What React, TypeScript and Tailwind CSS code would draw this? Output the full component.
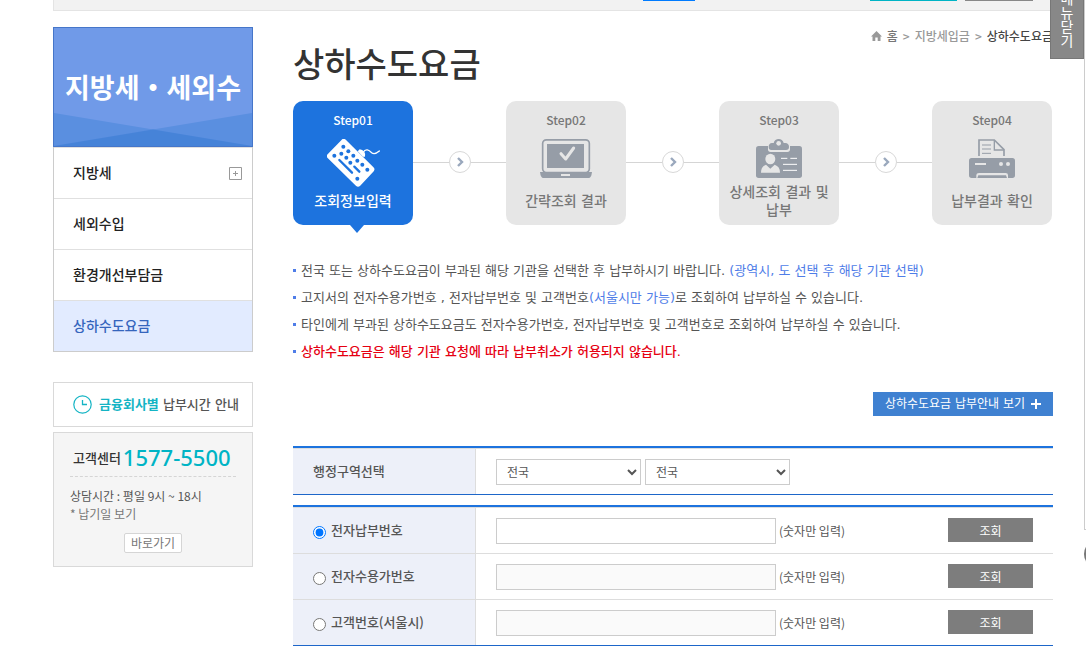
import { useState } from 'react';
import type { ReactNode } from 'react';
import { clsx } from 'clsx';

const menuItems = [
  { label: '지방세', expandable: true, active: false },
  { label: '세외수입', expandable: false, active: false },
  { label: '환경개선부담금', expandable: false, active: false },
  { label: '상하수도요금', expandable: false, active: true },
];

const searchTypes = [
  { id: 'epay', label: '전자납부번호' },
  { id: 'consumer', label: '전자수용가번호' },
  { id: 'customer', label: '고객번호(서울시)' },
];

function KeyboardIcon() {
  return (
    <svg width="53" height="48" viewBox="140 325 159 144" className="shrink-0" fill="none">
      <path d="M190 334 L273 416 L233 459 L149 376 Z" fill="#fff" stroke="#fff" strokeWidth="18" strokeLinejoin="round" />
      <path d="M232 362 L238 356 Q246 356 252 364 Q257 372 254 378 L248 378 Z" fill="#fff" />
      <path d="M248 366 C256 352 266 358 274 366 C282 373 290 367 297 361" stroke="#fff" strokeWidth="4" strokeLinecap="round" />
      <g fill="#1d73de">
        <circle cx="189" cy="348" r="6" />
        <circle cx="204" cy="362" r="6" />
        <circle cx="219" cy="375" r="6" />
        <circle cx="231" cy="390" r="6" />
        <circle cx="246" cy="402" r="6" />
        <circle cx="261" cy="417" r="6" />
        <circle cx="183" cy="369" r="6" />
        <circle cx="198" cy="381" r="6" />
        <circle cx="210" cy="396" r="6" />
        <circle cx="162" cy="375" r="6" />
        <circle cx="231" cy="444" r="6" />
      </g>
      <path d="M177 388 L215 426 M222 408 L237 423" stroke="#1d73de" strokeWidth="7" strokeLinecap="round" />
    </svg>
  );
}

function LaptopIcon() {
  return (
    <svg width="52" height="39" viewBox="0 0 156 117" className="shrink-0" fill="none">
      <rect x="8" y="2.5" width="140" height="98" rx="11" stroke="#969da7" strokeWidth="5" />
      <rect x="21" y="15" width="111" height="72" fill="#969da7" />
      <path d="M0 99 H156 Q154 117 146 117 H10 Q2 117 0 99 Z" fill="#969da7" />
      <rect x="63" y="105" width="27" height="6" fill="#e6e6e6" />
      <path d="M63 44 L77 60 L101 27" stroke="#e6e6e6" strokeWidth="9" strokeLinecap="round" strokeLinejoin="round" />
    </svg>
  );
}

function IdCardIcon() {
  return (
    <svg width="46" height="39" viewBox="0 0 138 117" className="shrink-0" fill="none">
      <rect y="21" width="138" height="96" rx="8" fill="#969da7" />
      <path d="M36 21 V31 Q36 39 44 39 H94 Q102 39 102 31 V21 Z" fill="#e6e6e6" />
      <path d="M48 12 H53 C56 -4 80 -4 83 12 H88 Q99 13 99 24 Q99 33 90 33 H46 Q38 33 38 24 Q38 13 48 12 Z" fill="#969da7" />
      <circle cx="68" cy="13" r="7" fill="#e6e6e6" />
      <ellipse cx="43" cy="60" rx="15" ry="16" fill="#e6e6e6" />
      <path d="M15 101 Q15 82 30 77 L43 89 L56 77 Q72 82 72 101 Z" fill="#e6e6e6" />
      <path d="M75 58 H94 M103 58 H123 M81 76 H123 M81 94 H123" stroke="#fff" strokeWidth="3" />
    </svg>
  );
}

function PrinterIcon() {
  return (
    <svg width="46" height="39" viewBox="0 0 138 117" className="shrink-0" fill="none">
      <path d="M30 51 V3 H76 L105 32 V51" stroke="#969da7" strokeWidth="5" />
      <path d="M76 3 V33 H105" stroke="#969da7" strokeWidth="4" />
      <path d="M39 18 H66 M39 30 H66 M39 43 H66" stroke="#969da7" strokeWidth="3" />
      <path d="M8 57 H130 Q138 57 138 65 V109 Q138 117 130 117 H117 V108 Q117 102 110 102 H30 Q22 102 22 108 V117 H8 Q0 117 0 109 V65 Q0 57 8 57 Z" fill="#969da7" />
      <path d="M28 109 H111 L114 117 H25 Z" fill="#969da7" />
      <rect x="18" y="72" width="33" height="6" fill="#e6e6e6" />
      <circle cx="96" cy="75" r="6" fill="#e6e6e6" />
      <circle cx="117" cy="75" r="6" fill="#e6e6e6" />
    </svg>
  );
}

const steps = [
  { no: 'Step01', label: '조회정보입력', icon: <KeyboardIcon />, active: true },
  { no: 'Step02', label: '간략조회 결과', icon: <LaptopIcon />, active: false },
  { no: 'Step03', label: '상세조회 결과 및 납부', icon: <IdCardIcon />, active: false },
  { no: 'Step04', label: '납부결과 확인', icon: <PrinterIcon />, active: false },
];

function StepArrow() {
  return (
    <div className="flex flex-1 items-center pb-0.5">
      <span className="h-px flex-1 bg-[#d5d5d5]" />
      <span className="flex size-[22px] items-center justify-center rounded-full border border-[#d8d8d8]">
        <svg width="8" height="12" viewBox="0 0 8 12" fill="none">
          <path d="M2 2 L6 6 L2 10" stroke="#9aa8bd" strokeWidth="2.4" />
        </svg>
      </span>
      <span className="h-px flex-1 bg-[#d5d5d5]" />
    </div>
  );
}

function StepCard({ no, label, icon, active }: { no: string; label: string; icon: ReactNode; active: boolean }) {
  return (
    <div
      className={clsx(
        'relative flex w-[120px] shrink-0 flex-col items-center rounded-[10px] px-2 pt-[9px] pb-1.5',
        active ? 'bg-[#1d73de] text-white' : 'bg-[#e6e6e6] text-[#777]'
      )}
    >
      <span className="text-xs leading-5 font-medium">{no}</span>
      <div className="mt-[9px] flex h-11 items-start justify-center">{icon}</div>
      <div className="flex h-9 items-center text-center font-['DejaVu_Sans','Noto_Sans_CJK_KR',sans-serif] text-sm leading-[18px] font-medium">
        {label}
      </div>
      {active && (
        <svg width="14" height="8" viewBox="0 0 14 8" className="absolute top-full left-[57px]">
          <path d="M0 0 H14 L7 8 Z" fill="#1d73de" />
        </svg>
      )}
    </div>
  );
}

function Notice({ children, strong = false }: { children: ReactNode; strong?: boolean }) {
  return (
    <li className={clsx('flex items-center gap-[5px]', strong ? 'font-medium text-[#e60012]' : 'text-[#555]')}>
      <span className="size-[3px] shrink-0 bg-[#4f7de8]" />
      <span>{children}</span>
    </li>
  );
}

function Sidebar() {
  return (
    <aside className="w-[200px] shrink-0">
      <div className="relative flex h-[120px] items-center justify-center overflow-hidden border border-[#4676c9] bg-[#709ae8]">
        <svg viewBox="0 0 200 33" preserveAspectRatio="none" className="absolute inset-x-0 bottom-0 h-[33px] w-full">
          <path d="M0 0 L200 33 H0 Z" fill="#5a8fe0" />
          <path d="M200 0 L0 33 H200 Z" fill="#5a8fe0" />
          <path d="M100 16.5 L200 33 H0 Z" fill="#4683d8" />
        </svg>
        <h2 className="relative text-[27px] font-bold whitespace-nowrap text-white">지방세・세외수</h2>
      </div>
      <nav className="border-x border-b border-[#ccc]">
        {menuItems.map((item) => (
          <a
            key={item.label}
            href="#"
            className={clsx(
              'flex h-[51px] items-center justify-between border-t border-[#e0e0e0] pr-2.5 pl-[19px] text-sm font-medium',
              item.active ? 'bg-[#e2ebff] text-[#3565bd]' : 'text-[#222]'
            )}
          >
            <span className="pb-0.5">{item.label}</span>
            {item.expandable && (
              <svg width="13" height="13" viewBox="0 0 13 13" fill="none" stroke="#999">
                <path d="M0.5 0.5 H12.5 V12.5 H0.5 Z M4 6.5 H9 M6.5 4 V9" />
              </svg>
            )}
          </a>
        ))}
      </nav>

      <a href="#" className="mt-[30px] flex h-[45px] items-center gap-[7px] border border-[#d9d9d9] pl-[19px] text-[13px] font-medium whitespace-nowrap text-[#555]">
        <svg width="19" height="19" viewBox="0 0 19 19" fill="none" stroke="#14b4c4">
          <circle cx="9.5" cy="9.5" r="8.7" strokeWidth="1.2" />
          <path d="M9.5 5 V9.5 H14" strokeWidth="1.3" />
        </svg>
        <span className="font-['DejaVu_Sans','Noto_Sans_CJK_KR',sans-serif]">
          <span className="font-bold text-[#14b4c4]">금융회사별</span> 납부시간 안내
        </span>
      </a>

      <div className="mt-[5px] h-[135px] border border-[#d9d9d9] bg-[#f5f5f5] px-4 pt-1.5">
        <div className="flex h-[38px] items-center gap-0.5 border-b border-dashed border-[#d5d5d5] pl-[3px] whitespace-nowrap">
          <span className="text-[13px] font-medium text-[#333]">고객센터</span>
          <span className="font-['Noto_Sans'] text-[22px] font-medium text-[#00b4c5]">1577-5500</span>
        </div>
        <p className="mt-2.5 text-xs leading-[18px] text-[#555]">상담시간 : 평일 9시 ~ 18시</p>
        <p className="text-xs leading-[18px] text-[#777]">* 납기일 보기</p>
        <div className="mt-2.5 flex justify-center">
          <button type="button" className="h-5 w-[58px] rounded-xs border border-[#d5d5d5] bg-white text-xs leading-none text-[#777]">
            바로가기
          </button>
        </div>
      </div>
    </aside>
  );
}

function SearchForm() {
  const [type, setType] = useState('epay');

  return (
    <form className="mt-[30px] flex flex-col gap-2.5" onSubmit={(e) => e.preventDefault()}>
      <table className="w-full border-separate border-spacing-0 border-t-2 border-b border-[#1d73de] border-b-[#1d66c9] text-[13px] text-[#555]">
        <tbody>
          <tr>
            <th scope="row" className="h-[46px] w-[183px] border-t border-r border-[#ddd] bg-[#edf0f9] pb-0.5 pl-5 text-left font-medium">
              <label htmlFor="sido">행정구역선택</label>
            </th>
            <td className="border-t border-[#ddd] px-5">
              <div className="flex gap-1">
                <select id="sido" className="h-[26px] w-[145px] border border-[#ccc] bg-white pl-1.5 text-xs">
                  <option>전국</option>
                </select>
                <select aria-label="시군구" className="h-[26px] w-[145px] border border-[#ccc] bg-white pl-1.5 text-xs">
                  <option>전국</option>
                </select>
              </div>
            </td>
          </tr>
        </tbody>
      </table>

      <table className="w-full border-separate border-spacing-0 border-t-2 border-b border-[#1d73de] border-b-[#1d66c9] text-[13px] text-[#555]">
        <tbody>
          {searchTypes.map((item) => (
            <tr key={item.id}>
              <th scope="row" className="h-[46px] w-[183px] border-t border-r border-[#ddd] bg-[#edf0f9] pb-0.5 pl-5 text-left font-medium">
                <label className="flex items-center gap-[5px]">
                  <input
                    type="radio"
                    name="searchType"
                    className="mt-1.5 size-[13px]"
                    checked={type === item.id}
                    onChange={() => setType(item.id)}
                  />
                  {item.label}
                </label>
              </th>
              <td className="border-t border-[#ddd] px-5">
                <div className="flex items-center">
                  <input
                    type="text"
                    id={item.id}
                    aria-label={item.label}
                    disabled={type !== item.id}
                    className="h-[26px] w-[280px] border border-[#ccc] bg-white px-2 text-xs disabled:bg-[#fafafa]"
                  />
                  <label htmlFor={item.id} className="ml-[3px] text-xs">(숫자만 입력)</label>
                  <button type="button" className="ml-auto h-6 w-[85px] self-start bg-[#7d7d7d] pt-0.5 text-xs text-white">
                    조회
                  </button>
                </div>
              </td>
            </tr>
          ))}
        </tbody>
      </table>
    </form>
  );
}

export default function App() {
  return (
    <div className="relative min-h-screen overflow-hidden bg-white pr-[33px] pl-[53px] font-['Noto_Sans_CJK_KR',sans-serif]">
      {/* Bottom edge of the search bar */}
      <div className="flex h-[11px] items-start border-b border-l border-[#e4e4e4] bg-[#f2f2f2] pr-5">
        <span className="ml-[589px] h-px w-[52px] bg-[#007bff]" />
        <span className="ml-auto h-px w-[87px] bg-[#00b4c5]" />
        <span className="ml-2 h-px w-[68px] bg-[#888]" />
      </div>

      <div className="mt-4 flex gap-10">
        <Sidebar />

        <main className="min-w-0 flex-1">
          <div className="flex items-start justify-between">
            <h1 className="pb-0.5 text-[34px] leading-[72px] font-medium text-[#333]">상하수도요금</h1>
            <nav className="flex items-center gap-[5px] text-xs leading-[18px] font-medium whitespace-nowrap text-[#999]">
              <svg width="11" height="10" viewBox="0 0 11 10" fill="#999">
                <path d="M5.5 0 L11 5.5 H9.5 V10 H6.7 V6.5 H4.3 V10 H1.5 V5.5 H0 Z" />
              </svg>
              <a href="#" className="text-[#777]">홈</a>
              <span>&gt;</span>
              <a href="#">지방세입금</a>
              <span>&gt;</span>
              <a href="#" className="text-[#444]">상하수도요금</a>
            </nav>
          </div>

          <div className="flex pr-px">
            {steps.map((step, i) => (
              <div key={step.no} className={clsx('flex', i > 0 && 'flex-1')}>
                {i > 0 && <StepArrow />}
                <StepCard {...step} />
              </div>
            ))}
          </div>

          <ul className="mt-8 font-['DejaVu_Sans','Noto_Sans_CJK_KR',sans-serif] text-[13px] leading-[27px]">
            <Notice>
              전국 또는 상하수도요금이 부과된 해당 기관을 선택한 후 납부하시기 바랍니다.{' '}
              <span className="text-[#4f7de8]">(광역시, 도 선택 후 해당 기관 선택)</span>
            </Notice>
            <Notice>
              고지서의 전자수용가번호 , 전자납부번호 및 고객번호<span className="text-[#4f7de8]">(서울시만 가능)</span>로
              조회하여 납부하실 수 있습니다.
            </Notice>
            <Notice>타인에게 부과된 상하수도요금도 전자수용가번호, 전자납부번호 및 고객번호로 조회하여 납부하실 수 있습니다.</Notice>
            <Notice strong>상하수도요금은 해당 기관 요청에 따라 납부취소가 허용되지 않습니다.</Notice>
          </ul>

          <div className="mt-[27px] flex justify-end">
            <button
              type="button"
              className="flex h-6 items-center gap-1.5 bg-[#3f81d1] px-3 font-['DejaVu_Sans','Noto_Sans_CJK_KR',sans-serif] text-xs text-white"
            >
              상하수도요금 납부안내 보기
              <svg width="10" height="10" viewBox="0 0 10 10" stroke="#fff" strokeWidth="2">
                <path d="M0 5 H10 M5 0 V10" />
              </svg>
            </button>
          </div>

          <SearchForm />
        </main>
      </div>

      {/* Quick menu docked on the right edge */}
      <div className="absolute top-0 right-0 h-[530px] w-0.5 border-b border-l border-[#ccc] bg-white" />
      <div className="absolute top-[540px] -right-[26px] size-7 rounded-full bg-[#777]" />
      <button
        type="button"
        className="absolute top-0 right-0.5 flex h-[59px] w-[34px] items-end justify-center overflow-hidden border border-t-0 border-[#777] bg-[#888] pb-2.5 text-sm text-white"
      >
        <span className="whitespace-nowrap [writing-mode:vertical-rl]">메뉴닫기</span>
      </button>
    </div>
  );
}
